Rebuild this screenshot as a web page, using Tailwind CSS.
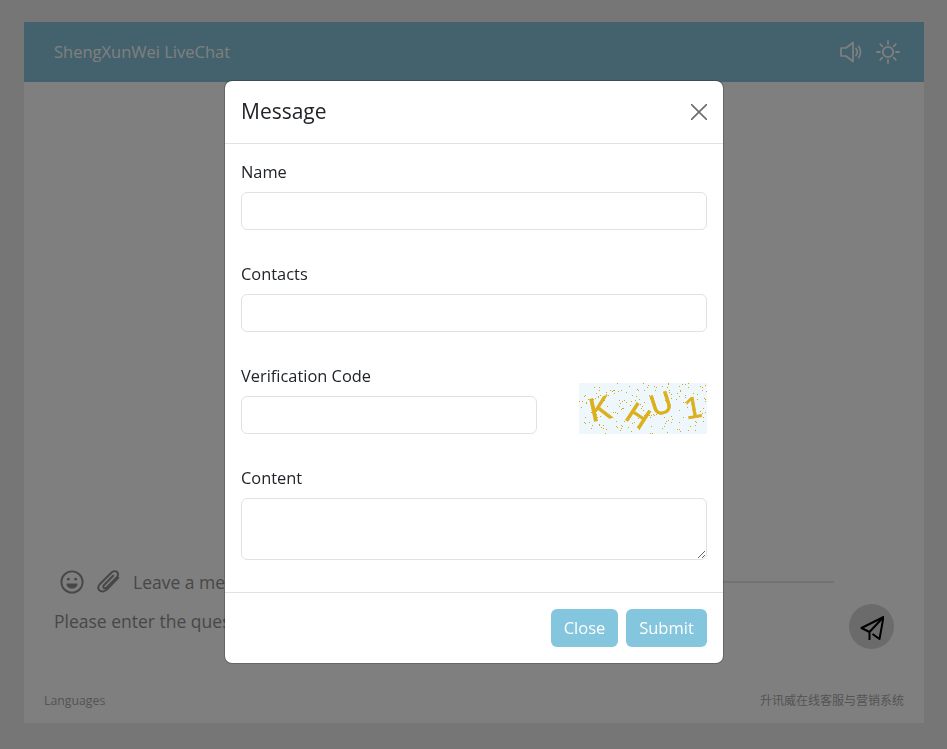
<!DOCTYPE html>
<html lang="en">
<head>
    <meta charset="UTF-8">
    <title>ShengXunWei LiveChat</title>
    <meta name="viewport" content="width=device-width, initial-scale=1.0">
    <script src="https://cdn.jsdelivr.net/npm/@tailwindcss/browser@4"></script>
</head>
<body class="bg-[#ededed] h-[749px] overflow-hidden font-['Open_Sans','Noto_Sans_CJK_SC',sans-serif]">
    <!-- chat page behind the dialog -->
    <div class="pt-[22px] pl-[24px]">
        <div class="w-[900px] h-[701px] bg-white flex flex-col">
            <div class="h-[60px] bg-[#86c4da] flex items-center justify-between pl-[30px] pr-[24px]">
                <span class="text-[16.500px] text-white">ShengXunWei LiveChat</span>
                <div class="flex items-center gap-[13px] text-white">
                    <svg class="w-[24px] h-[24px]" viewBox="0 0 24 24" fill="none" stroke="currentColor" stroke-width="1.700">
                        <path d="M2 8h5l7-5.500v19L7 16H2z" stroke-linejoin="round"/>
                        <path d="M17 8.500c1.400 2 1.400 5 0 7M19.800 6.500c2.200 3.500 2.200 7.500 0 11" stroke-linecap="round"/>
                    </svg>
                    <svg class="w-[24px] h-[24px]" viewBox="0 0 24 24" fill="none" stroke="currentColor" stroke-width="1.800" stroke-linecap="round">
                        <circle cx="12" cy="12" r="5.200"/>
                        <path d="M12 1v3M12 20v3M1 12h3M20 12h3M4.200 4.200l2.100 2.100M17.700 17.700l2.100 2.100M4.200 19.800l2.100-2.100M17.700 6.300l2.100-2.100"/>
                    </svg>
                </div>
            </div>
            <div class="flex-1"></div>
            <div class="flex items-center h-[44px] pl-[36px] pr-[90px]">
                <svg class="w-[24px] h-[24px] text-[#8f8f8f]" viewBox="0 0 26 26" fill="none" stroke="currentColor" stroke-width="2">
                    <circle cx="13" cy="13" r="11.500"/>
                    <circle cx="9" cy="10" r="1.500" fill="currentColor" stroke="none"/>
                    <circle cx="17" cy="10" r="1.500" fill="currentColor" stroke="none"/>
                    <path d="M7 14.500h12c0 3.500-2.700 5.500-6 5.500s-6-2-6-5.500z" fill="currentColor" stroke="none"/>
                </svg>
                <svg class="w-[24px] h-[26px] ml-[13px] text-[#8f8f8f]" viewBox="0 0 26 26" fill="none" stroke="currentColor" stroke-width="2.200" stroke-linecap="round">
                    <path d="M23 8.500 11 21c-2.600 2.700-7 2.800-8.500.9-1.700-2-1-5 1-7.100L15.500 3c2-2 4.700-2.200 6.200-.8 1.600 1.500 1.300 4-.4 5.800L10.500 19c-1 1-2.400 1.200-3.200.4-.8-.8-.6-2.200.4-3.200l9.800-10"/>
                </svg>
                <span class="ml-[12px] text-[17.500px] text-[#8f8f8f] whitespace-nowrap">Leave a message</span>
                <div class="flex-1 ml-[10px] border-b-2 border-[#e4e4e4]"></div>
            </div>
            <div class="flex items-start justify-between h-[75px] pl-[30px] pr-[30px]">
                <span class="text-[17.500px] leading-[24px] mt-[5px] text-[#8f8f8f]">Please enter the question here</span>
                <div class="w-[45px] h-[45px] rounded-full bg-[#d6d6d6] flex items-center justify-center">
                    <svg class="w-[24px] h-[26px] text-black" viewBox="0 0 24 26" fill="none" stroke="currentColor" stroke-width="2" stroke-linejoin="round">
                        <path d="M23.500 3 1.500 14l8 4L23.500 3l-4 22-7-5M9.500 18v8"/>
                    </svg>
                </div>
            </div>
            <div class="h-[44px] flex items-center justify-between px-[20px] text-[12.300px] text-[#a8a8a8]">
                <span>Languages</span>
                <span class="text-[12px]">升讯威在线客服与营销系统</span>
            </div>
        </div>
    </div>

    <!-- backdrop -->
    <div class="fixed inset-0 bg-black/50"></div>

    <!-- message dialog -->
    <div class="fixed left-[224px] top-[80px] w-[500px] h-[584px] bg-white rounded-[8px] border border-black/20 bg-clip-padding flex flex-col text-[#212529]">
        <div class="h-[63px] shrink-0 flex items-center justify-between px-[16px] border-b border-[#dee2e6]">
            <h5 class="text-[21px]">Message</h5>
            <svg class="w-[16px] h-[16px] text-[#6c6c6c]" viewBox="0 0 16 16" fill="none" stroke="currentColor" stroke-width="1.600">
                <path d="M0 0l16 16M16 0 0 16"/>
            </svg>
        </div>
        <div class="flex-1 px-[16px] pt-[16px]">
            <label class="block text-[16.400px] leading-[24px] mb-[8px]">Name</label>
            <input class="block w-full h-[38px] border border-[#dee2e6] rounded-[6px] mb-[32px]">
            <label class="block text-[16.400px] leading-[24px] mb-[8px]">Contacts</label>
            <input class="block w-full h-[38px] border border-[#dee2e6] rounded-[6px] mb-[32px]">
            <label class="block text-[16.400px] leading-[24px] mb-[8px]">Verification Code</label>
            <div class="flex justify-between items-end h-[38px] mb-[32px]">
                <input class="block w-[296px] h-[38px] border border-[#dee2e6] rounded-[6px]">
                <svg id="captcha" class="w-[128px] h-[51px] shrink-0 bg-[#eef7fc]" viewBox="0 0 128 51">
                    <g fill="#dcb01c" stroke="#dcb01c" stroke-width=".7" font-family="Liberation Sans, sans-serif" text-anchor="middle" font-size="33">
                        <text transform="translate(21 25) rotate(-12)" y="12">K</text>
                        <text transform="translate(59 33) rotate(33)" y="10" font-size="30">H</text>
                        <text transform="translate(82 20) rotate(-18)" y="11" font-size="30">U</text>
                        <text transform="translate(114 24) rotate(-10)" y="11" font-size="30">1</text>
                    </g>
                </svg>
            </div>
            <label class="block text-[16.400px] leading-[24px] mb-[8px]">Content</label>
            <textarea class="block w-full h-[62px] border border-[#dee2e6] rounded-[6px]"></textarea>
        </div>
        <div class="h-[71px] shrink-0 flex items-center justify-end gap-[8px] px-[16px] border-t border-[#dee2e6]">
            <button class="w-[67px] h-[38px] rounded-[6px] bg-[#84c6dd] text-white text-[16.500px] font-medium">Close</button>
            <button class="w-[81px] h-[38px] rounded-[6px] bg-[#84c6dd] text-white text-[16.500px] font-medium">Submit</button>
        </div>
    </div>

    <script>
        // captcha noise
        var svg = document.getElementById('captcha');
        var seed = 7;
        for (var i = 0; i < 190; i++) {
            seed = (seed * 16807) % 2147483647;
            var x = seed % 128;
            seed = (seed * 16807) % 2147483647;
            var y = seed % 51;
            var dot = document.createElementNS('http://www.w3.org/2000/svg', 'rect');
            dot.setAttribute('x', x);
            dot.setAttribute('y', y);
            dot.setAttribute('width', 1);
            dot.setAttribute('height', 1);
            dot.setAttribute('fill', '#d9a90f');
            svg.appendChild(dot);
        }
    </script>
</body>
</html>
